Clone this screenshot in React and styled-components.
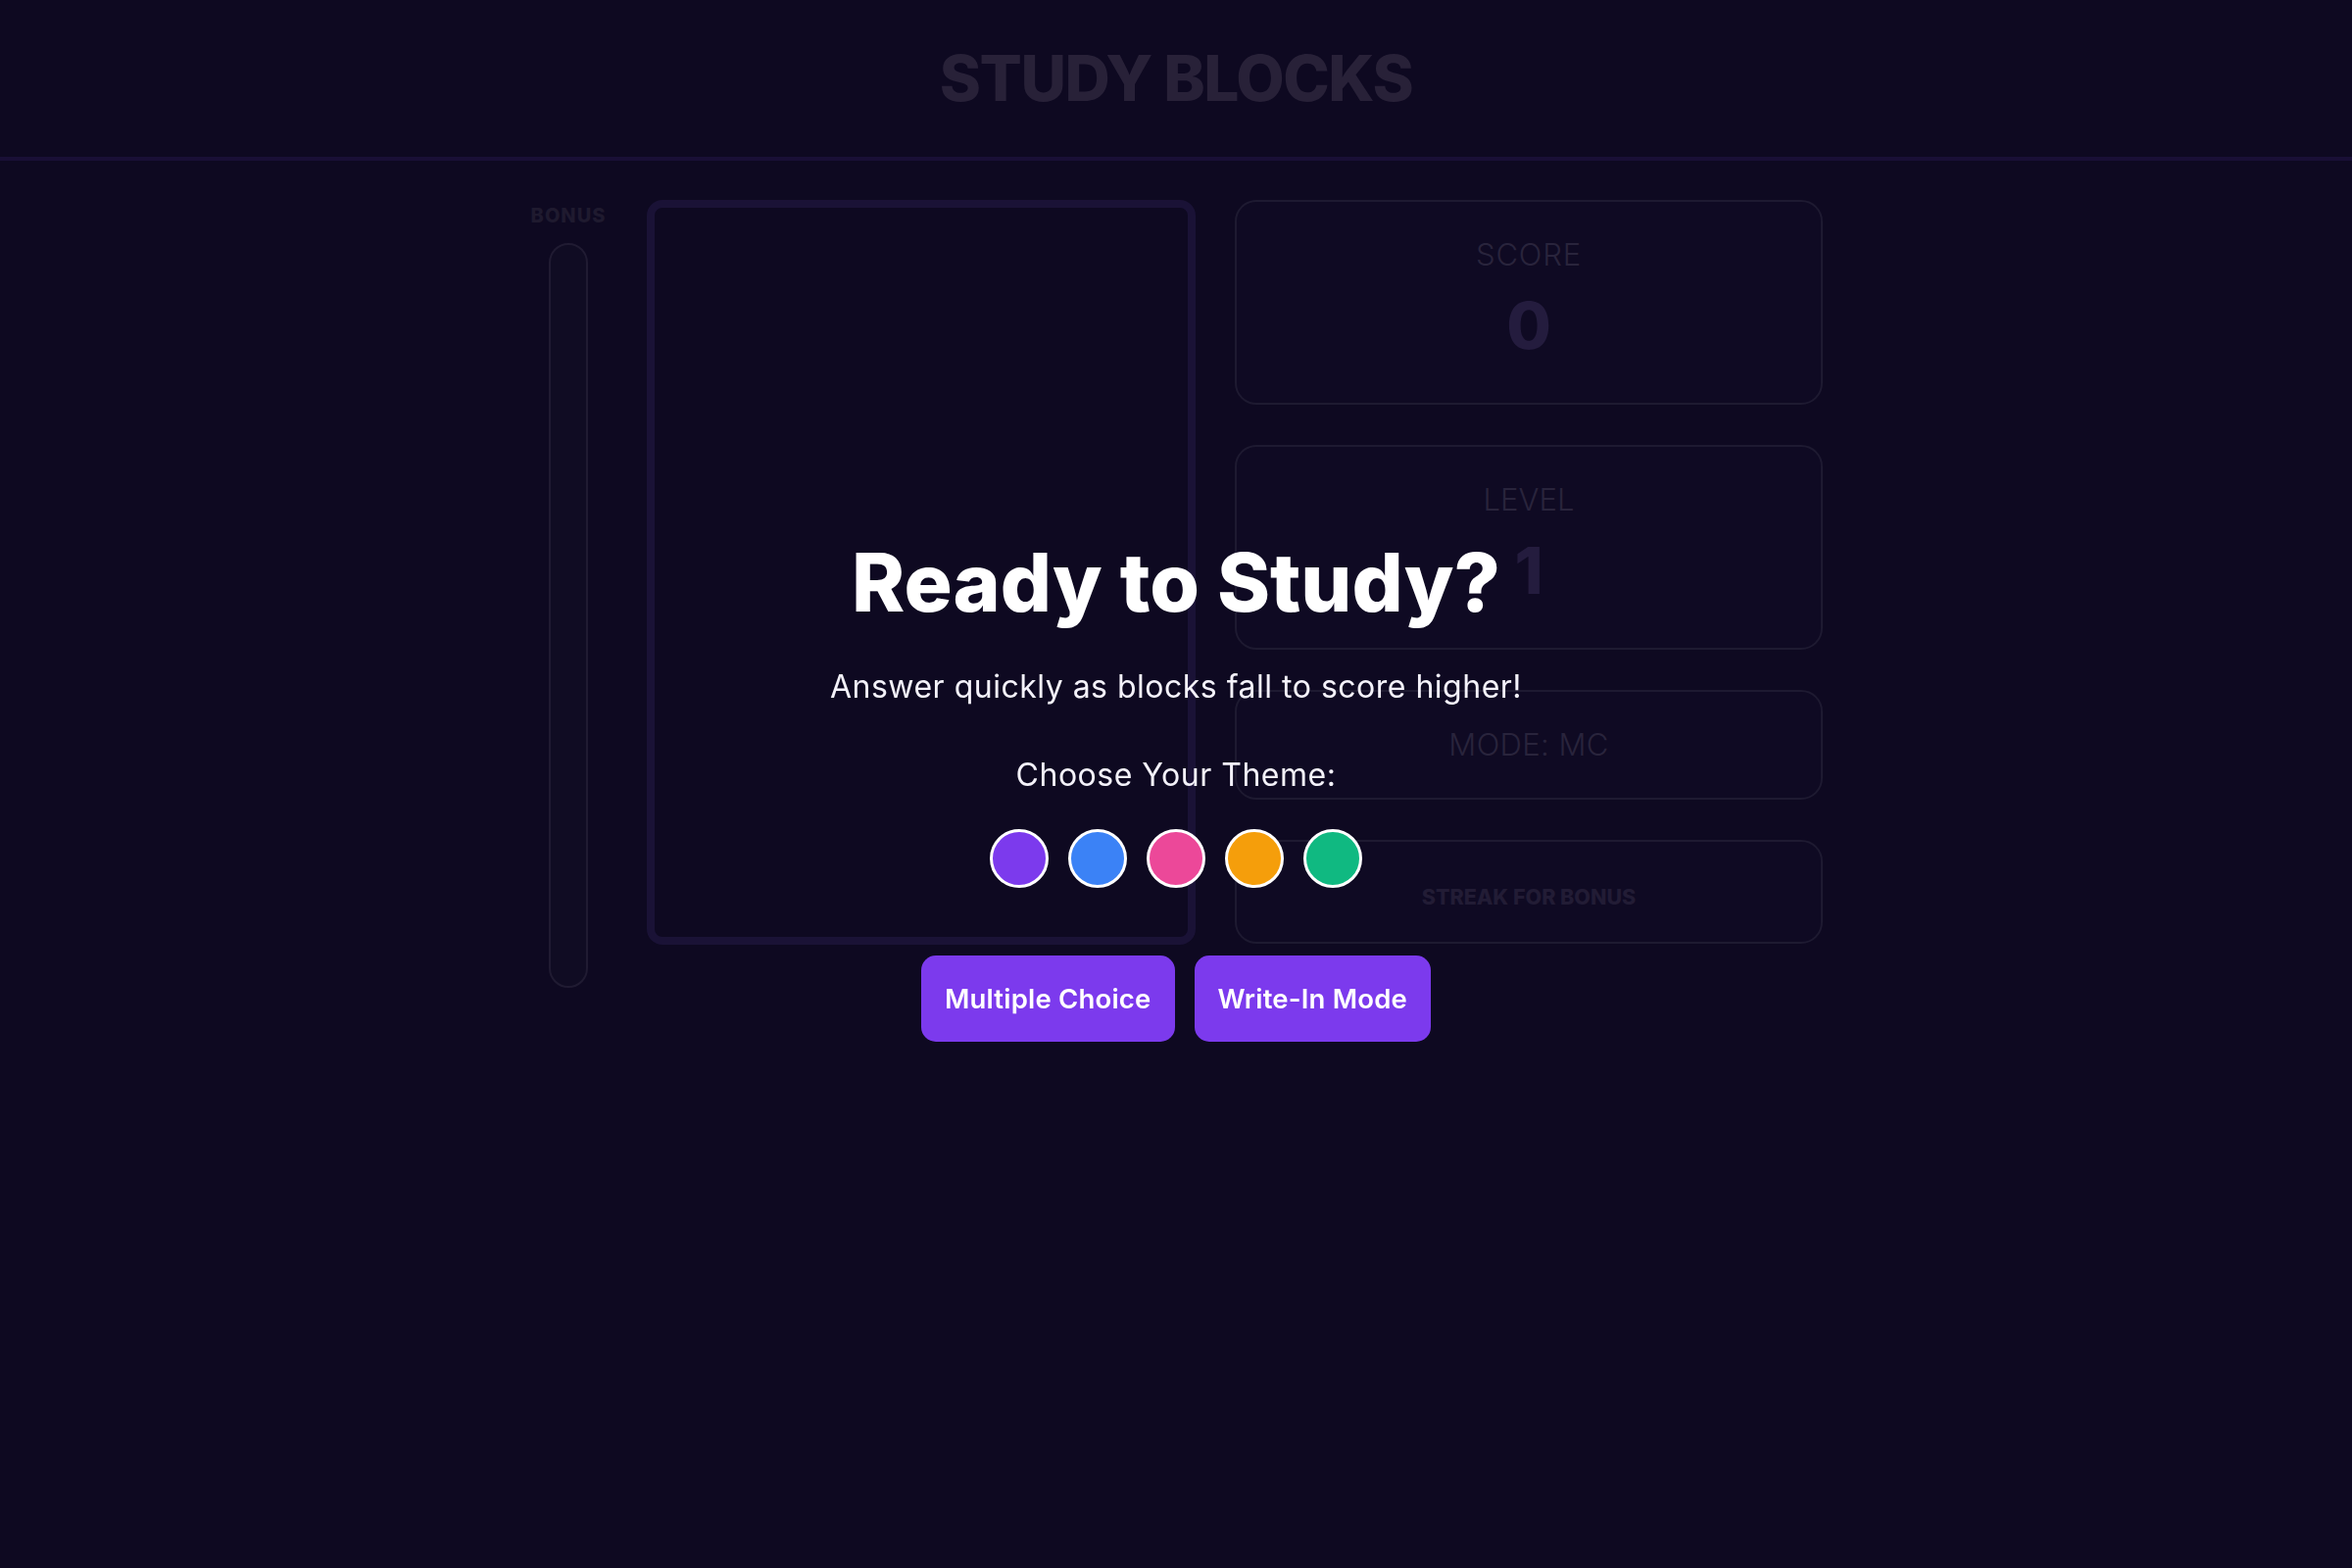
import React from "react";
import styled, { createGlobalStyle } from "styled-components";

const GlobalStyle = createGlobalStyle`
  html, body {
    margin: 0;
    padding: 0;
    background: #0e0921;
  }
  body {
    font-family: "Inter", "Noto Sans", sans-serif;
    color: #ffffff;
  }
  * { box-sizing: border-box; }
`;

const Page = styled.div`
  min-height: 100vh;
  background: #0e0921;
`;

const Header = styled.header`
  height: 164px;
  border-bottom: 4px solid #190f36;
  display: flex;
  align-items: center;
  justify-content: center;
`;

const Logo = styled.h1`
  margin: 0;
  font-size: 64px;
  line-height: 80px;
  font-weight: 800;
  letter-spacing: -1.5px;
  color: #282138;
`;

const Main = styled.main`
  display: flex;
  justify-content: center;
  align-items: flex-start;
  gap: 40px;
  padding-top: 40px;
`;

const BonusColumn = styled.div`
  width: 80px;
  display: flex;
  flex-direction: column;
  align-items: center;
`;

const BonusLabel = styled.div`
  font-size: 20px;
  line-height: 32px;
  font-weight: 800;
  letter-spacing: 1px;
  color: #1f1a2f;
`;

const BonusBar = styled.div`
  margin-top: 12px;
  width: 40px;
  height: 760px;
  border: 2px solid #201b32;
  border-radius: 20px;
  background: #100c23;
`;

const Board = styled.div`
  width: 560px;
  height: 760px;
  border: 8px solid #1a1236;
  border-radius: 16px;
  background: #0e0921;
`;

const Panel = styled.div`
  width: 600px;
  display: flex;
  flex-direction: column;
  gap: 41px;
`;

const Card = styled.div`
  border: 2px solid #1e1a31;
  border-radius: 22px;
  background: #0f0a23;
  text-align: center;
  padding: ${(p) => p.$pad || "29px 20px"};
`;

const CardLabel = styled.div`
  font-size: 31px;
  line-height: 50px;
  font-weight: 300;
  letter-spacing: ${(p) => p.$spacing || "0.6px"};
  color: #29243c;
`;

const CardValue = styled.div`
  font-size: 66px;
  line-height: 94px;
  margin-bottom: 3px;
  font-weight: 800;
  color: #241c3e;
`;

const StreakLabel = styled.div`
  font-size: 21.5px;
  line-height: 44px;
  font-weight: 800;
  letter-spacing: 0px;
  color: #221c35;
`;

const Overlay = styled.div`
  position: fixed;
  inset: 0;
  display: flex;
  flex-direction: column;
  align-items: center;
  justify-content: center;
  padding-top: 8px;
  text-align: center;
`;

const Title = styled.h2`
  margin: 0;
  font-size: 82px;
  line-height: 100px;
  font-weight: 800;
  color: #ffffff;
`;

const Subtitle = styled.p`
  margin: 32px 0 0;
  font-size: 32px;
  line-height: 48px;
  font-weight: 400;
  letter-spacing: 0.5px;
  color: #f4f2fa;
`;

const ThemeLabel = styled.p`
  margin: 41.5px 0 0;
  font-size: 32px;
  line-height: 48px;
  font-weight: 400;
  letter-spacing: 0.5px;
  color: #f4f2fa;
`;

const Swatches = styled.div`
  margin-top: 31.5px;
  display: flex;
  gap: 20px;
`;

const Swatch = styled.button`
  width: 60px;
  height: 60px;
  padding: 0;
  border-radius: 50%;
  border: 3px solid #ffffff;
  background: ${(p) => p.$color};
  cursor: pointer;
`;

const Buttons = styled.div`
  margin-top: 69px;
  display: flex;
  gap: 20px;
`;

const ModeButton = styled.button`
  height: 88px;
  padding: 0 24px;
  border: none;
  border-radius: 15px;
  background: #7c3aed;
  color: #ffffff;
  font-family: inherit;
  font-size: 27.5px;
  font-weight: 600;
  letter-spacing: 0.2px;
  cursor: pointer;
`;

const themes = ["#7c3aed", "#3b82f6", "#ec4899", "#f59e0b", "#10b981"];

export default function App() {
  return (
    <Page>
      <GlobalStyle />
      <Header>
        <Logo>STUDY BLOCKS</Logo>
      </Header>
      <Main>
        <BonusColumn>
          <BonusLabel>BONUS</BonusLabel>
          <BonusBar />
        </BonusColumn>
        <Board />
        <Panel>
          <Card>
            <CardLabel $spacing="0.8px">SCORE</CardLabel>
            <CardValue>0</CardValue>
          </Card>
          <Card>
            <CardLabel $spacing="0px">LEVEL</CardLabel>
            <CardValue>1</CardValue>
          </Card>
          <Card>
            <CardLabel $spacing="0.4px">MODE: MC</CardLabel>
          </Card>
          <Card $pad="34px 20px 24px">
            <StreakLabel>STREAK FOR BONUS</StreakLabel>
          </Card>
        </Panel>
      </Main>
      <Overlay>
        <Title>Ready to Study?</Title>
        <Subtitle>Answer quickly as blocks fall to score higher!</Subtitle>
        <ThemeLabel>Choose Your Theme:</ThemeLabel>
        <Swatches>
          {themes.map((c) => (
            <Swatch key={c} $color={c} aria-label={c} />
          ))}
        </Swatches>
        <Buttons>
          <ModeButton>Multiple Choice</ModeButton>
          <ModeButton>Write-In Mode</ModeButton>
        </Buttons>
      </Overlay>
    </Page>
  );
}
